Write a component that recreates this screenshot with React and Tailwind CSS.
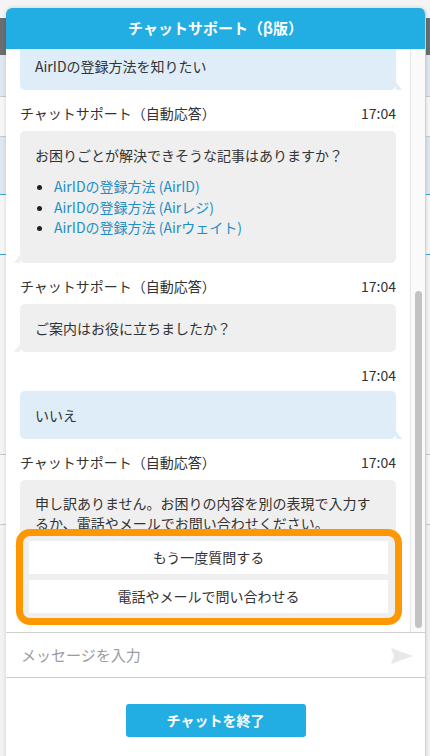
const font = { fontFamily: '"Noto Sans CJK JP", "Noto Sans", sans-serif' }

function NameRow({ name, time }) {
  return (
    <div className="mt-[13px] mb-2 flex h-5 items-center justify-between text-[14px] leading-5 text-[#333]">
      <span>{name}</span>
      <span>{time}</span>
    </div>
  )
}

function BotBubble({ children, className = '' }) {
  return (
    <div className={`relative rounded-[5px] bg-[#efefef] px-[15px] text-[14px] leading-5 text-[#333] ${className}`}>
      {children}
      <span className="absolute -left-[6px] bottom-0 h-0 w-0 border-b-[8px] border-l-[6px] border-b-[#efefef] border-l-transparent" />
    </div>
  )
}

function UserBubble({ children, className = '' }) {
  return (
    <div className={`relative rounded-[5px] bg-[#dfedf8] px-[15px] text-[14px] leading-5 text-[#333] ${className}`}>
      {children}
      <span className="absolute -right-[6px] bottom-0 h-0 w-0 border-b-[8px] border-r-[6px] border-b-[#dfedf8] border-r-transparent" />
    </div>
  )
}

export default function App() {
  const links = ['AirIDの登録方法 (AirID)', 'AirIDの登録方法 (Airレジ)', 'AirIDの登録方法 (Airウェイト)']

  return (
    <div className="relative h-[756px] w-[430px] overflow-hidden bg-[#f2f3f4]" style={font}>
      {/* page behind the widget */}
      <div className="h-[18px] bg-[#f4f4f4]" />
      <div className="h-[37px] bg-[#6a6e6e]" />
      <div className="h-[42px] border-b border-[#c9c9c9] bg-[#dfe8ef]" />
      <div className="h-[40px] border-b border-[#c9c9c9] bg-[#f7f7f7]" />
      <div className="h-[58px] border-b border-[#3da5d9] bg-[#dfe8ef]" />
      <div className="h-[60px] border-b border-[#3da5d9] bg-[#f7f7f7]" />
      <div className="h-[200px] border-b border-[#c9c9c9] bg-[#f4f4f4]" />
      <div className="h-[70px] border-b border-[#c9c9c9] bg-[#f7f7f7]" />

      {/* chat widget */}
      <div className="absolute left-[6px] top-[8px] flex h-[760px] w-[420px] flex-col overflow-hidden rounded-t-[6px] border-r border-[#d0d0d0] bg-white shadow-[0_0_4px_rgba(0,0,0,0.15)]">
        <div className="flex h-[41px] shrink-0 items-center justify-center bg-[#22ade3] text-[15px] font-bold text-white">
          チャットサポート（β版）
        </div>

        <div className="relative flex h-[583px] shrink-0">
          <div className="flex-1 overflow-hidden px-[14px]">
            <div className="-mt-[4px]">
              <UserBubble className="pb-[14px] pt-[11px]">AirIDの登録方法を知りたい</UserBubble>

              <NameRow name="チャットサポート（自動応答）" time="17:04" />
              <BotBubble className="pb-[25px] pt-[14px]">
                <p>お困りごとが解決できそうな記事はありますか？</p>
                <ul className="mt-[11px] list-disc pl-[19px] leading-[20.5px] marker:text-[#222]">
                  {links.map((l) => (
                    <li key={l} className="text-[#1e8fc6]">{l}</li>
                  ))}
                </ul>
              </BotBubble>

              <NameRow name="チャットサポート（自動応答）" time="17:04" />
              <BotBubble className="py-[14px]">ご案内はお役に立ちましたか？</BotBubble>

              <div className="mt-[13px] mb-[6px] flex h-5 items-center justify-end text-[14px] leading-5 text-[#333]">17:04</div>
              <UserBubble className="py-[14px]">いいえ</UserBubble>

              <NameRow name="チャットサポート（自動応答）" time="17:04" />
              <BotBubble className="pb-[14px] pt-[13px]">
                申し訳ありません。お困りの内容を別の表現で入力するか、電話やメールでお問い合わせください。
              </BotBubble>
            </div>
          </div>

          <div className="flex w-[15px] flex-col border-l border-[#e6e6e6] bg-[#fafafa]">
            <div className="h-[242px]" />
            <div className="mx-auto h-[337px] w-[7px] rounded-full bg-[#c3c3c3]" />
          </div>

          {/* highlighted quick replies */}
          <div className="absolute bottom-[7px] left-[10px] flex w-[386px] flex-col gap-[6px] rounded-[14px] border-[7px] border-[#ff9800] bg-[#efefef] py-[5px] pl-[6px] pr-[7px]">
            <button className="h-[33px] bg-white text-[14px] text-[#333]">もう一度質問する</button>
            <button className="h-[33px] bg-white text-[14px] text-[#333]">電話やメールで問い合わせる</button>
          </div>
        </div>

        <div className="flex h-[46px] shrink-0 items-center justify-between border-y border-[#cfcfcf] pl-[15px] pr-[12px]">
          <span className="text-[15px] text-[#9a9ca3]">メッセージを入力</span>
          <svg width="22" height="16" viewBox="0 0 22 16" className="mt-[2px]">
            <path d="M0 0 L22 8 L0 16 L3 8 Z" fill="#e8e8e8" />
          </svg>
        </div>

        <div className="flex justify-center pt-[26px]">
          <button className="h-[33px] w-[180px] rounded-[3px] bg-[#22ade3] text-[14px] font-bold text-white">
            チャットを終了
          </button>
        </div>
      </div>
    </div>
  )
}
